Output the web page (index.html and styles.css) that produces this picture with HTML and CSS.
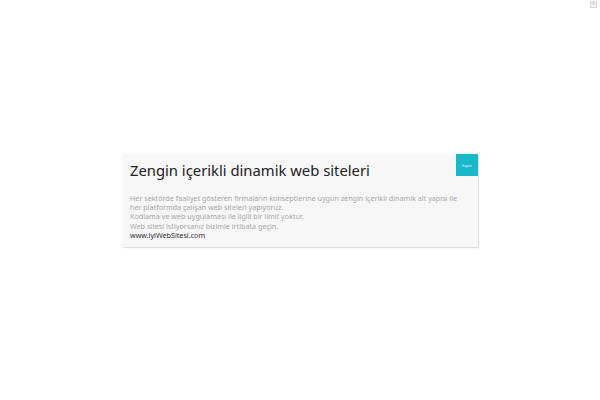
FILE: index.html
```html
<!DOCTYPE html>
<html lang="tr">
<head>
<meta charset="utf-8">
<link rel="stylesheet" href="styles.css">
</head>
<body>
<div class="corner">+</div>
<div class="stage">
  <div class="card">
    <div class="head">
      <h1 class="title">Zengin içerikli dinamik web siteleri</h1>
      <button class="close">Kapat</button>
    </div>
    <div class="text">
      <p class="muted">Her sektörde faaliyet gösteren firmaların konseptlerine uygun zengin içerikli dinamik alt yapısı ile her platformda çalışan web siteleri yapıyoruz.</p>
      <p class="muted">Kodlama ve web uygulaması ile ilgili bir limit yoktur.</p>
      <p class="muted">Web sitesi istiyorsanız bizimle irtibata geçin.</p>
      <p class="site">www.iyiWebSitesi.com</p>
    </div>
  </div>
</div>
</body>
</html>
```
FILE: styles.css
```css
html, body {
  margin: 0;
  padding: 0;
  background: #ffffff;
  width: 600px;
  height: 400px;
  overflow: hidden;
  font-family: "Noto Sans", "DejaVu Sans", sans-serif;
}
.corner {
  position: absolute;
  top: 1px;
  right: 3px;
  width: 5px;
  height: 5px;
  border: 1px solid #d8d8d8;
  background: #f2f2f2;
  color: #aaa;
  font-size: 5px;
  line-height: 5px;
  text-align: center;
}
.stage {
  display: flex;
  justify-content: center;
  padding-top: 154px;
}
.card {
  width: 356px;
  background: #f7f7f7;
  box-shadow: 1px 1px 1px rgba(0,0,0,0.12);
  padding-bottom: 7px;
}
.head {
  display: flex;
  justify-content: space-between;
  align-items: flex-start;
}
.title {
  margin: 6px 0 0 8px;
  font-size: 14.8px;
  font-weight: normal;
  color: #222;
  line-height: 20px;
}
.close {
  width: 22px;
  height: 22px;
  border: 0;
  padding: 0;
  background: #1ab7c9;
  color: #e6f7fa;
  font-family: inherit;
  font-size: 3.5px;
}
.text {
  margin: 14px 8px 0 8px;
  font-size: 7.2px;
  line-height: 9.2px;
}
.text p {
  margin: 0;
}
.muted {
  color: #a8a8a8;
}
.site {
  color: #333;
}
```
